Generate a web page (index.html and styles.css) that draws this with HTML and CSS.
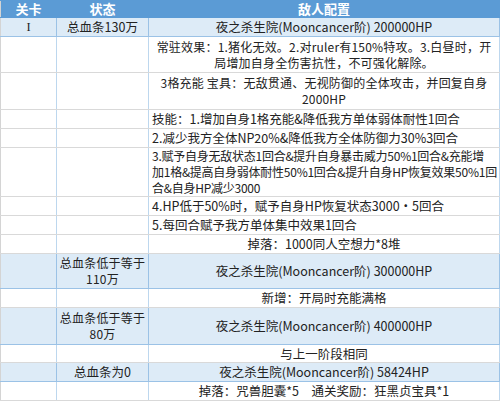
FILE: index.html
```html
<!DOCTYPE html>
<html>
<head>
<meta charset="utf-8">
<link rel="stylesheet" href="styles.css">
</head>
<body>
<table class="sheet">
  <colgroup><col class="c1"><col class="c2"><col class="c3"></colgroup>
  <tr class="head h17"><td>关卡</td><td>状态</td><td>敌人配置</td></tr>
  <tr class="blue h19"><td class="roman">I</td><td>总血条130万</td><td>夜之杀生院(Mooncancer阶) 200000HP</td></tr>
  <tr class="h36"><td></td><td></td><td class="two">常驻效果：1.猪化无效。2.对ruler有150%特攻。3.白昼时，开<br>局增加自身全伤害抗性，不可强化解除。</td></tr>
  <tr class="h37"><td></td><td></td><td class="two">3格充能 宝具：无敌贯通、无视防御的全体攻击，并回复自身<br>2000HP</td></tr>
  <tr class="h19"><td></td><td></td><td class="left">技能：1.增加自身1格充能&amp;降低我方单体弱体耐性1回合</td></tr>
  <tr class="h19"><td></td><td></td><td class="left">2.减少我方全体NP20%&amp;降低我方全体防御力30%3回合</td></tr>
  <tr class="h49"><td></td><td></td><td class="left tight">3.赋予自身无敌状态1回合&amp;提升自身暴击威力50%1回合&amp;充能增<br>加1格&amp;提高自身弱体耐性50%1回合&amp;提升自身HP恢复效果50%1回<br>合&amp;自身HP减少3000</td></tr>
  <tr class="h19"><td></td><td></td><td class="left">4.HP低于50%时，赋予自身HP恢复状态3000・5回合</td></tr>
  <tr class="h19"><td></td><td></td><td class="left">5.每回合赋予我方单体集中效果1回合</td></tr>
  <tr class="h19"><td></td><td></td><td>掉落：1000同人空想力*8堆</td></tr>
  <tr class="blue h35"><td></td><td class="two">总血条低于等于<br>110万</td><td>夜之杀生院(Mooncancer阶) 300000HP</td></tr>
  <tr class="h19"><td></td><td></td><td>新增：开局时充能满格</td></tr>
  <tr class="blue h37"><td></td><td class="two">总血条低于等于<br>80万</td><td>夜之杀生院(Mooncancer阶) 400000HP</td></tr>
  <tr class="h18"><td></td><td></td><td>与上一阶段相同</td></tr>
  <tr class="blue h19"><td></td><td>总血条为0</td><td>夜之杀生院(Mooncancer阶) 58424HP</td></tr>
  <tr class="h19"><td></td><td></td><td>掉落：咒兽胆囊*5　通关奖励：狂黑贞宝具*1</td></tr>
</table>
</body>
</html>
```

FILE: styles.css
```css
html, body {
  margin: 0;
  padding: 0;
  background: #ffffff;
}
.sheet {
  border-collapse: collapse;
  table-layout: fixed;
  width: 499px;
  font-family: "Noto Sans CJK SC", "Liberation Sans", sans-serif;
  font-size: 12.5px;
  line-height: 16px;
  color: #222222;
}
.c1 { width: 56px; }
.c2 { width: 92px; }
.c3 { width: 351px; }
.sheet td {
  padding: 0 2px;
  text-align: center;
  vertical-align: middle;
  white-space: nowrap;
  overflow: hidden;
  border-top: 1px solid #d9d9d9;
  border-bottom: 1px solid #d9d9d9;
  border-left: 1px solid #bdd7ee;
  border-right: 1px solid #bdd7ee;
}
.sheet td:first-child { border-left-color: #d4d4d4; }
.sheet td.two { font-size: 12px; line-height: 16px; letter-spacing: 0.2px; }
.sheet td.left { text-align: left; padding-left: 3px; }
.sheet td.tight { font-size: 12px; line-height: 16px; letter-spacing: -0.25px; padding-right: 0; }
.head td {
  background: #5b9bd5;
  color: #ffffff;
  font-weight: bold;
  font-size: 13px;
  border-color: #5b9bd5;
}
.blue td {
  background: #ddebf7;
  border-top-color: #9bc2e6;
  border-bottom-color: #9bc2e6;
  border-left-color: #9bc2e6;
  border-right-color: #9bc2e6;
}
.roman { font-family: "Liberation Serif", serif; }
.h17 { height: 17px; }
.h18 { height: 18px; }
.h19 { height: 19px; }
.h35 { height: 35px; }
.h36 { height: 36px; }
.h37 { height: 37px; }
.h49 { height: 49px; }
```
